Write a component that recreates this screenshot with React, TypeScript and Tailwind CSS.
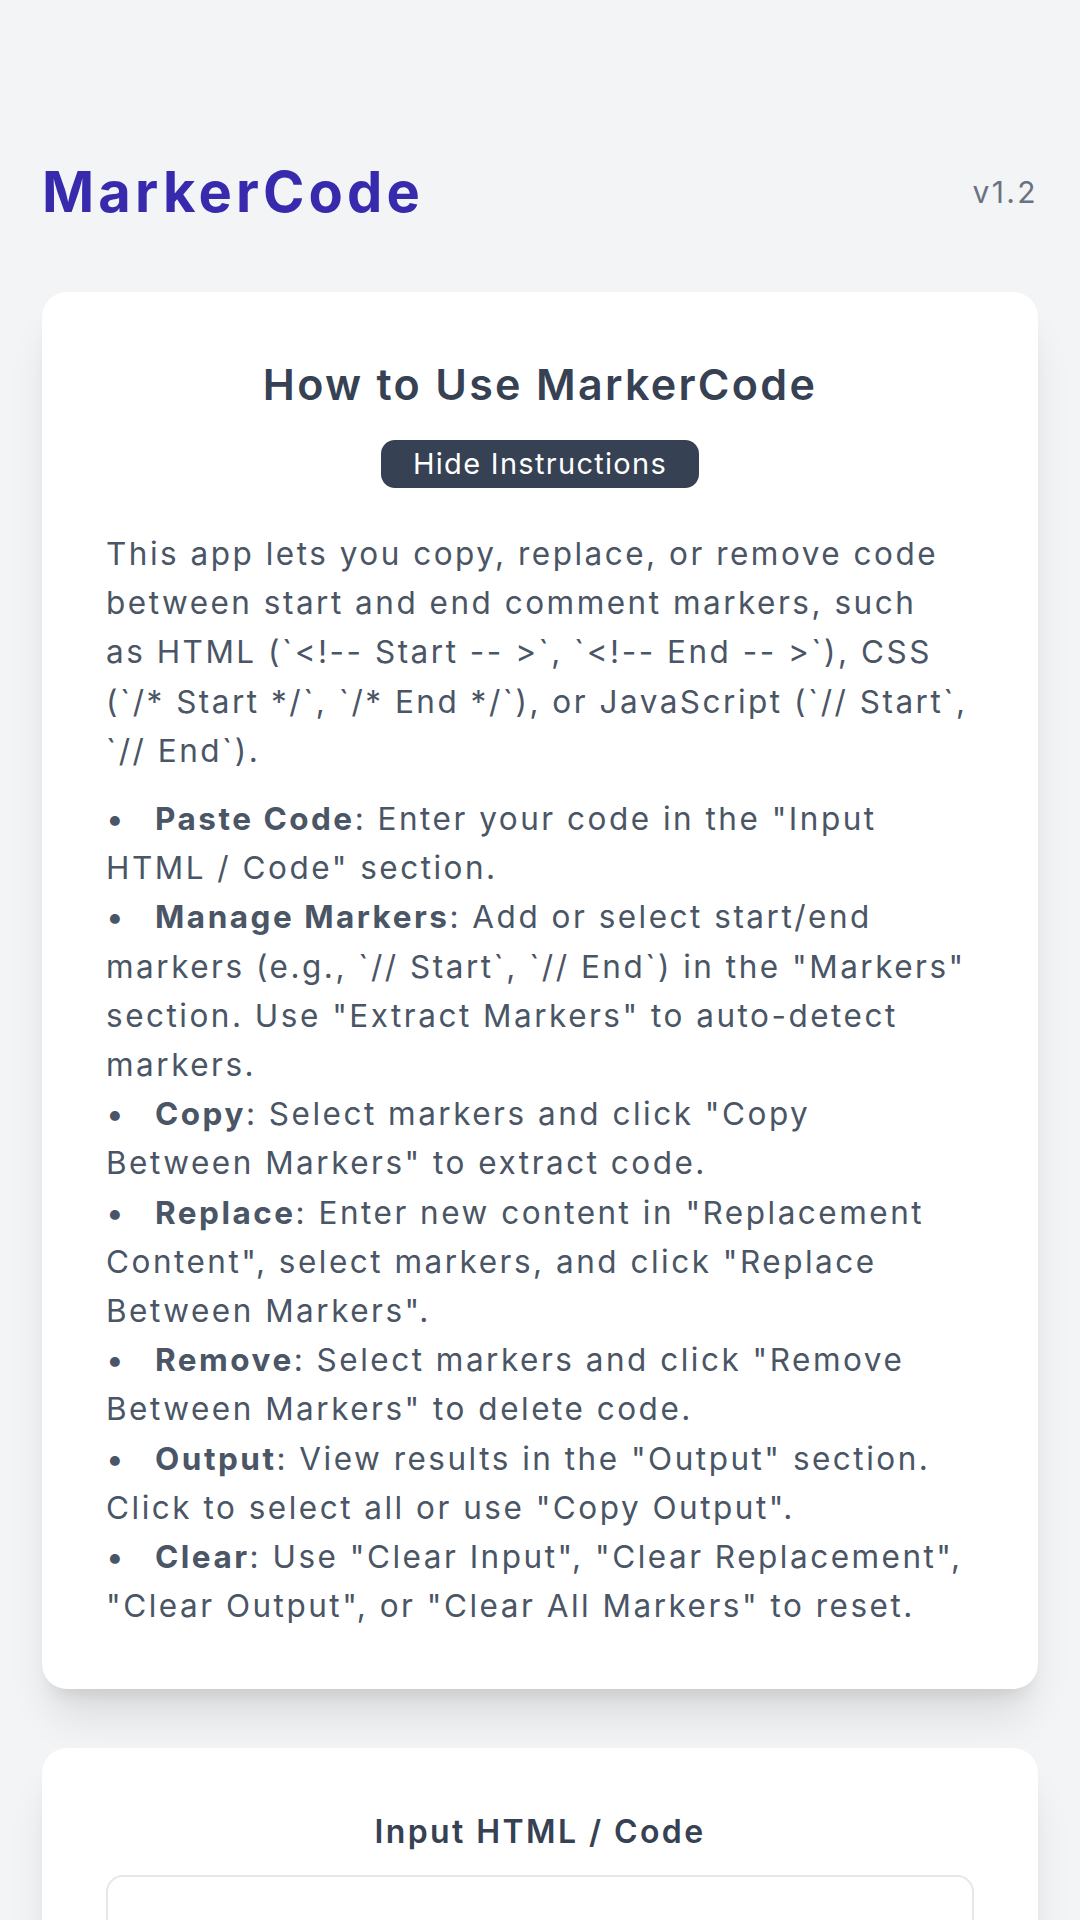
import React from 'react'

const steps: { label: string; text: React.ReactNode }[] = [
  { label: 'Paste Code', text: 'Enter your code in the "Input HTML / Code" section.' },
  {
    label: 'Manage Markers',
    text: 'Add or select start/end markers (e.g., `// Start`, `// End`) in the "Markers" section. Use "Extract Markers" to auto-detect markers.',
  },
  {
    label: 'Copy',
    text: (
      <>
        Select markers and click "Copy
        <br />
        Between Markers" to extract code.
      </>
    ),
  },
  {
    label: 'Replace',
    text: 'Enter new content in "Replacement Content", select markers, and click "Replace Between Markers".',
  },
  { label: 'Remove', text: 'Select markers and click "Remove Between Markers" to delete code.' },
  { label: 'Output', text: 'View results in the "Output" section. Click to select all or use "Copy Output".' },
  {
    label: 'Clear',
    text: 'Use "Clear Input", "Clear Replacement", "Clear Output", or "Clear All Markers" to reset.',
  },
]

const cardShadow =
  'shadow-[0_35px_44px_-9px_rgba(0,0,0,0.1),0_14px_18px_-10px_rgba(0,0,0,0.1)]'

export default function App() {
  return (
    <div className="min-h-screen bg-gray-100 px-[42px] pt-[164px] font-['Inter',sans-serif]">
      {/* Header */}
      <header className="flex items-center justify-between">
        <h1 className="text-[56px] leading-[56px] font-bold tracking-[4.2px] text-indigo-800">
          MarkerCode
        </h1>
        <span className="text-[30px] tracking-[2.4px] text-gray-500">v1.2</span>
      </header>

      {/* Instructions */}
      <section className={`mt-[72px] rounded-[25px] bg-white px-16 pt-16 pb-[59px] ${cardShadow}`}>
        <h2 className="text-center text-[43px] leading-[56px] font-semibold tracking-[2.3px] text-gray-700">
          How to Use MarkerCode
        </h2>
        <button className="mx-auto mt-[28px] block h-[48px] rounded-[14px] bg-gray-700 px-[32px] text-[29px] tracking-[1.3px] text-white">
          Hide Instructions
        </button>
        <div className="text-[31.5px] leading-[49.2px] tracking-[2.5px] text-gray-600">
          <p className="mt-[41px]">
            This app lets you copy, replace, or remove code between start and end comment markers, such
            <br />
            as HTML (`&lt;!-- Start -- &gt;`, `&lt;!-- End -- &gt;`), CSS (`/* Start */`, `/* End */`),
            or JavaScript (`// Start`, `// End`).
          </p>
          <ul className="mt-[19px]">
            {steps.map((s) => (
              <li key={s.label}>
                <span className="mr-[10px] inline-block w-[39px]">•</span>
                <strong className="font-bold">{s.label}</strong>: {s.text}
              </li>
            ))}
          </ul>
        </div>
      </section>

      {/* Input */}
      <section className={`mt-[59px] rounded-[25px] bg-white p-16 ${cardShadow}`}>
        <h3 className="text-center text-[32px] leading-[40px] font-semibold tracking-[2.4px] text-gray-700">
          Input HTML / Code
        </h3>
        <textarea className="mt-[23px] block h-[320px] w-full resize-none rounded-[17px] border-2 border-gray-200" />
      </section>
    </div>
  )
}
